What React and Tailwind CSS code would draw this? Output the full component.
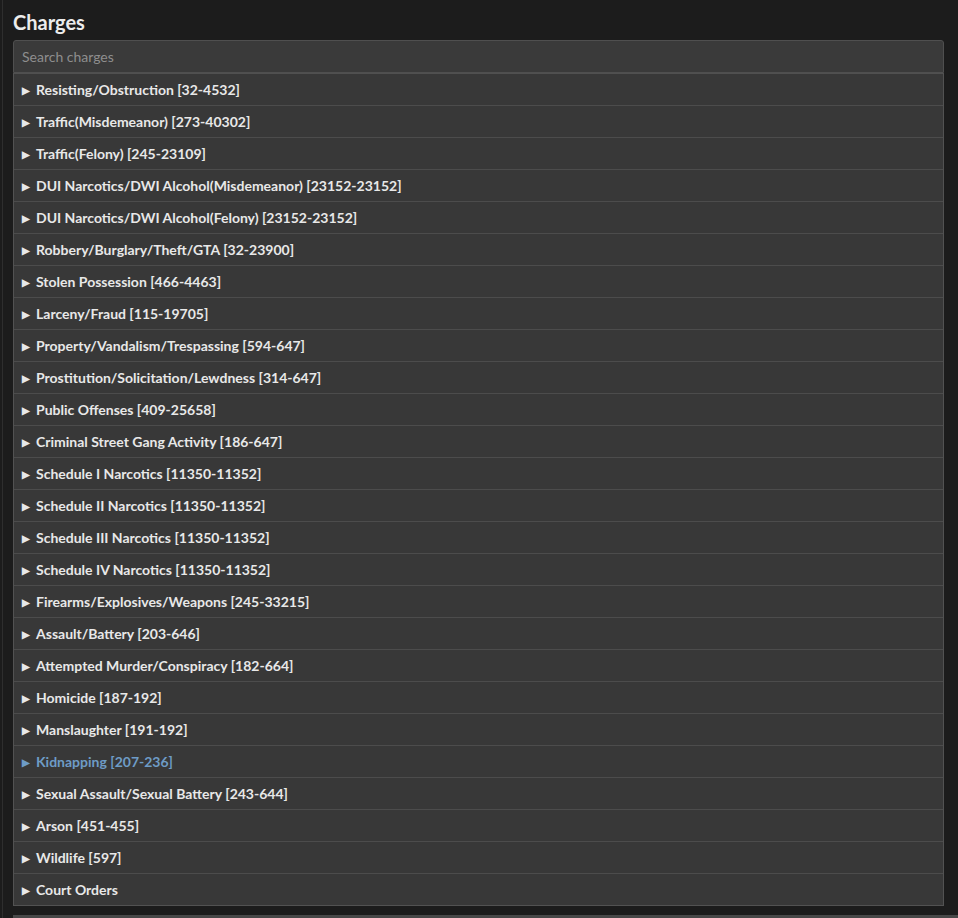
import React from 'react';

const charges = [
  'Resisting/Obstruction [32-4532]',
  'Traffic(Misdemeanor) [273-40302]',
  'Traffic(Felony) [245-23109]',
  'DUI Narcotics/DWI Alcohol(Misdemeanor) [23152-23152]',
  'DUI Narcotics/DWI Alcohol(Felony) [23152-23152]',
  'Robbery/Burglary/Theft/GTA [32-23900]',
  'Stolen Possession [466-4463]',
  'Larceny/Fraud [115-19705]',
  'Property/Vandalism/Trespassing [594-647]',
  'Prostitution/Solicitation/Lewdness [314-647]',
  'Public Offenses [409-25658]',
  'Criminal Street Gang Activity [186-647]',
  'Schedule I Narcotics [11350-11352]',
  'Schedule II Narcotics [11350-11352]',
  'Schedule III Narcotics [11350-11352]',
  'Schedule IV Narcotics [11350-11352]',
  'Firearms/Explosives/Weapons [245-33215]',
  'Assault/Battery [203-646]',
  'Attempted Murder/Conspiracy [182-664]',
  'Homicide [187-192]',
  'Manslaughter [191-192]',
  'Kidnapping [207-236]',
  'Sexual Assault/Sexual Battery [243-644]',
  'Arson [451-455]',
  'Wildlife [597]',
  'Court Orders',
];

const App = () => {
  return (
    <div className="flex h-[918px] w-[958px] overflow-hidden bg-[#1c1c1c] font-['Lato','Open_Sans',sans-serif]">
      {/* window edge */}
      <div className="ml-[2px] w-px bg-[#2e2e2e]" />

      <div className="flex flex-1 flex-col pl-[10px]">
        <h1 className="mt-[9px] h-[31px] shrink-0 text-[20px] font-bold leading-[26px] text-[#ececec]">Charges</h1>

        <div className="mr-[14px] shrink-0">
          <input
            placeholder="Search charges"
            className="h-[33px] w-full rounded-t-[3px] border border-[#4f4f4f] bg-[#3a3a3a] px-[8px] text-[14px] text-[#ddd] outline-none placeholder:text-[#8e8e8e]"
          />

          <div className="border-x border-b border-[#525252] bg-[#383838]">
            {charges.map((c, i) => {
              const hover = c.startsWith('Kidnapping');
              return (
                <div
                  key={c}
                  className={`flex h-[32px] items-center gap-[6px] pl-[8px] text-[14px] font-bold ${i > 0 ? 'border-t border-[#4c4c4c]' : 'border-t border-[#505050]'} ${hover ? 'text-[#6e9cc6]' : 'text-[#e8e8e8]'}`}
                >
                  <span className="text-[10px] leading-none">▶</span>
                  <span>{c}</span>
                </div>
              );
            })}
          </div>
        </div>

        <div className="mt-[9px] h-[4px] shrink-0 bg-[#484848]" />
      </div>
    </div>
  );
};

export default App;
